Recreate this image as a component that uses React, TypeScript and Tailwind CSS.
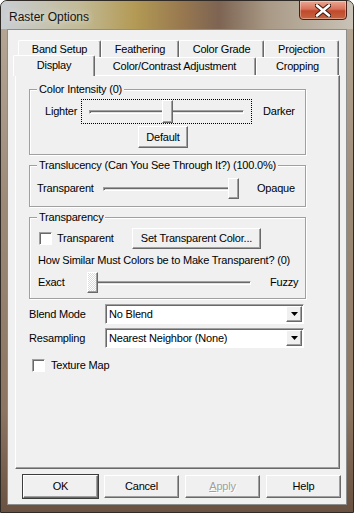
import { ReactNode } from "react";

const font = { fontFamily: '"Liberation Sans", Arial, sans-serif' };

const raised =
  "border border-t-white border-l-white border-b-[#696969] border-r-[#696969] shadow-[inset_-1px_-1px_0_#a0a0a0]";
const sunken =
  "border border-t-[#a0a0a0] border-l-[#a0a0a0] border-b-white border-r-white shadow-[inset_1px_1px_0_#696969]";

type TabProps = { label: string; w: string; selected?: boolean };

const Tab = ({ label, w, selected }: TabProps) => (
  <div
    className={`${w} flex items-center justify-center bg-[#f0f0f0] border border-b-0 border-t-white border-l-white border-r-[#696969] rounded-t-[2px] shadow-[inset_-1px_0_0_#a0a0a0] ${
      selected ? "h-[21px] -mb-[1px] -mx-[2px] relative z-10 pb-[2px]" : "h-full"
    }`}
  >
    {label}
  </div>
);

type SliderProps = { w: number; pos: number; hatched?: boolean; h?: number };

// classic trackbar: groove + thumb
const Slider = ({ w, pos, hatched, h = 21 }: SliderProps) => (
  <div className="relative flex items-center" style={{ width: w, height: h }}>
    <div className={`w-full h-[4px] bg-[#e3e3e3] ${sunken}`} />
    <div
      className={`absolute top-0 w-[11px] h-full ${raised} ${
        hatched
          ? "bg-[repeating-conic-gradient(#ffffff_0_25%,#dcdcdc_0_50%)] bg-[length:2px_2px]"
          : "bg-[#f0f0f0]"
      }`}
      style={{ left: pos }}
    />
  </div>
);

const Button = ({
  children,
  w,
  h = "h-[22px]",
  def,
  disabled,
}: {
  children: ReactNode;
  w: string;
  h?: string;
  def?: boolean;
  disabled?: boolean;
}) => (
  <div
    className={`${w} ${h} flex items-center justify-center bg-[#f0f0f0] ${raised} ${
      def ? "outline outline-1 outline-[#3c3c3c]" : ""
    } ${disabled ? "text-[#a0a0a0] [text-shadow:1px_1px_0_#fff]" : "text-black"}`}
  >
    {children}
  </div>
);

const Check = () => <div className={`w-[13px] h-[13px] bg-white ${sunken}`} />;

const Select = ({ value }: { value: string }) => (
  <div className={`w-[199px] h-[20px] bg-white flex items-center ${sunken} p-[1px]`}>
    <span className="flex-1 pl-[2px] pt-[1px]">{value}</span>
    <div className={`w-[16px] h-full bg-[#f0f0f0] flex items-center justify-center ${raised}`}>
      <svg width="7" height="4" viewBox="0 0 7 4">
        <path d="M0 0h7L3.5 4z" fill="#000" />
      </svg>
    </div>
  </div>
);

const Group = ({ title, children, cls }: { title: string; children: ReactNode; cls: string }) => (
  <div className={`w-[277px] border border-[#a0a0a0] shadow-[1px_1px_0_#fff,inset_1px_1px_0_#fff] ${cls}`}>
    <div className="-mt-[7px] ml-[7px] px-[2px] w-fit bg-[#f0f0f0] leading-[13px]">{title}</div>
    {children}
  </div>
);

export default function App() {
  return (
    <div
      className="w-[354px] h-[513px] overflow-hidden rounded-t-[7px] border border-[#2f2a26] text-[11px] tracking-[-0.2px] text-black bg-[linear-gradient(180deg,#b7aa97_0%,#9c8a77_40%,#8c7561_80%,#6a5242_100%)]"
      style={font}
    >
      {/* title bar */}
      <div className="h-[28px] flex items-start bg-[linear-gradient(90deg,#c9ced3_0%,#c2bb98_22%,#b39a55_38%,#96774f_52%,#7d6453_62%,#a99a86_76%,#c9c2b6_100%)]">
        <div className="pl-[8px] pt-[7px] text-[12px] tracking-normal text-[#141414] [text-shadow:0_0_6px_#f4efe4]">
          Raster Options
        </div>
        <div className="ml-auto mr-[6px] w-[48px] h-[20px] -mt-[1px] rounded-b-[4px] border border-[#4d1e14] bg-[linear-gradient(180deg,#e9a892_0%,#d9715a_45%,#c04a2c_55%,#c8653f_100%)] shadow-[inset_0_0_0_1px_rgba(255,255,255,0.35)] flex items-center justify-center">
          <svg width="16" height="13" viewBox="0 0 16 13">
            <path
              d="M2 1.5L14 11.5M14 1.5L2 11.5"
              stroke="#3a1a10"
              strokeWidth="4.6"
              strokeLinecap="round"
            />
            <path
              d="M2 1.5L14 11.5M14 1.5L2 11.5"
              stroke="#ffffff"
              strokeWidth="2.6"
              strokeLinecap="round"
            />
          </svg>
        </div>
      </div>

      {/* client area */}
      <div className="ml-[6px] w-[340px] h-[476px] bg-[#f0f0f0] border border-[#8d8d8d]">
        <div className="ml-[7px] mt-[10px] w-[325px]">
          {/* tabs back row */}
          <div className="flex h-[17px] ml-[3px]">
            <Tab label="Band Setup" w="w-[83px]" />
            <Tab label="Feathering" w="w-[78px]" />
            <Tab label="Color Grade" w="w-[85px]" />
            <Tab label="Projection" w="w-[75px]" />
          </div>
          {/* tabs front row */}
          <div className="flex h-[18px] items-end">
            <Tab label="Display" w="w-[82px]" selected />
            <Tab label="Color/Contrast Adjustment" w="w-[163px]" />
            <Tab label="Cropping" w="w-[83px]" />
          </div>

          {/* panel */}
          <div className="h-[394px] bg-[#f0f0f0] border border-t-white border-l-white border-r-[#696969] border-b-[#696969] shadow-[inset_-1px_-1px_0_#a0a0a0] pl-[13px] pt-[13px]">
            <Group title="Color Intensity (0)" cls="pb-[6px]">
              <div className="flex items-center mt-[3px] h-[25px] pl-[15px]">
                <span className="w-[36px]">Lighter</span>
                <div className="w-[171px] h-[25px] border border-dotted border-black flex items-center pl-[7px]">
                  <Slider w={155} pos={73} h={23} />
                </div>
                <span className="ml-[11px]">Darker</span>
              </div>
              <div className="mt-[2px] ml-[108px]">
                <Button w="w-[50px]">Default</Button>
              </div>
            </Group>

            <Group title="Translucency (Can You See Through It?) (100.0%)" cls="mt-[10px] pb-[7px]">
              <div className="flex items-center mt-[6px] h-[21px] pl-[7px]">
                <span className="w-[66px]">Transparent</span>
                <Slider w={136} pos={125} />
                <span className="ml-[18px]">Opaque</span>
              </div>
            </Group>

            <Group title="Transparency" cls="mt-[10px] pb-[5px]">
              <div className="flex items-center mt-[4px] h-[20px] pl-[9px]">
                <div className="w-[93px] flex items-center gap-[5px]">
                  <Check />
                  <span>Transparent</span>
                </div>
                <Button w="w-[129px]" h="h-[21px]">
                  Set Transparent Color...
                </Button>
              </div>
              <div className="mt-[6px] h-[13px] leading-[13px] pl-[8px]">
                How Similar Must Colors be to Make Transparent? (0)
              </div>
              <div className="flex items-center mt-[5px] h-[21px] pl-[8px]">
                <span className="w-[49px]">Exact</span>
                <Slider w={164} pos={0} hatched />
                <span className="ml-[19px]">Fuzzy</span>
              </div>
            </Group>

            <div className="flex items-center mt-[5px]">
              <span className="w-[76px]">Blend Mode</span>
              <Select value="No Blend" />
            </div>
            <div className="flex items-center mt-[4px]">
              <span className="w-[76px]">Resampling</span>
              <Select value="Nearest Neighbor (None)" />
            </div>
            <div className="flex items-center mt-[9px] ml-[3px] gap-[6px]">
              <Check />
              <span>Texture Map</span>
            </div>
          </div>
        </div>

        {/* dialog buttons */}
        <div className="flex gap-[6px] ml-[15px] mt-[6px]">
          <Button w="w-[75px]" h="h-[23px]" def>
            OK
          </Button>
          <Button w="w-[75px]" h="h-[23px]">
            Cancel
          </Button>
          <Button w="w-[75px]" h="h-[23px]" disabled>
            <span>
              <span className="underline">A</span>pply
            </span>
          </Button>
          <Button w="w-[75px]" h="h-[23px]">
            Help
          </Button>
        </div>
      </div>
    </div>
  );
}
